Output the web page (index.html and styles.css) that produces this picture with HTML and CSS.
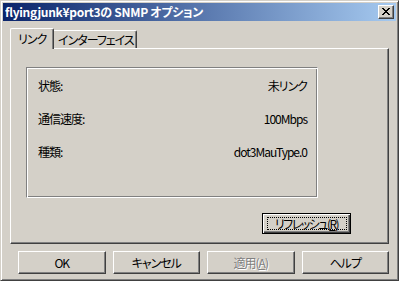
FILE: index.html
```html
<!DOCTYPE html>
<html lang="ja">
<head>
<meta charset="utf-8">
<title>SNMP オプション</title>
<link rel="stylesheet" href="styles.css">
</head>
<body>
<div class="window">
  <div class="titlebar">
    <span class="title">flyingjunk¥port3の SNMP オプション</span>
    <span class="close">
      <svg width="8" height="7" viewBox="0 0 8 7" shape-rendering="crispEdges">
        <path d="M0 0h2v1h-2zM6 0h2v1h-2zM1 1h2v1h-2zM5 1h2v1h-2zM2 2h4v1h-4zM3 3h2v1h-2zM2 4h4v1h-4zM1 5h2v1h-2zM5 5h2v1h-2zM0 6h2v1h-2zM6 6h2v1h-2z" fill="#000"/>
      </svg>
    </span>
  </div>
  <div class="content">
    <div class="tabs">
      <div class="tab active">リンク</div>
      <div class="tab inactive">インターフェイス</div>
    </div>
    <div class="panel">
      <div class="group">
        <div class="row"><span>状態:</span><span>未リンク</span></div>
        <div class="row"><span>通信速度:</span><span>100Mbps</span></div>
        <div class="row"><span>種類:</span><span>dot3MauType.0</span></div>
      </div>
      <div class="refresh-row">
        <div class="btn default"><span class="focus">リフレッシュ(<u>R</u>)</span></div>
      </div>
    </div>
    <div class="buttons">
      <div class="btn">OK</div>
      <div class="btn">キャンセル</div>
      <div class="btn disabled">適用(<u>A</u>)</div>
      <div class="btn">ヘルプ</div>
    </div>
  </div>
</div>
</body>
</html>
```
FILE: styles.css
```css
* { box-sizing: border-box; }
html, body { margin: 0; padding: 0; }
body {
  width: 399px;
  height: 281px;
  background: #d4d0c8;
  font-family: "Noto Sans CJK JP", "Liberation Sans", sans-serif;
  font-size: 12px;
  font-feature-settings: "palt";
  letter-spacing: -1px;
  color: #000;
  overflow: hidden;
}
.window {
  width: 399px;
  height: 281px;
  border: 1px solid;
  border-color: #d4d0c8 #404040 #404040 #d4d0c8;
  box-shadow: inset 1px 1px #fff, inset -1px -1px #808080;
  padding: 2px;
  background: #d4d0c8;
}
.titlebar {
  height: 18px;
  background: linear-gradient(to right, #0a246a, #a6caf0);
  display: flex;
  align-items: center;
  justify-content: space-between;
  padding: 0 2px 0 2px;
}
.title {
  color: #fff;
  font-weight: bold;
  font-size: 12px;
  line-height: 18px;
  white-space: nowrap;
  letter-spacing: -0.3px;
}
.close {
  width: 16px;
  height: 14px;
  background: #d4d0c8;
  border: 1px solid;
  border-color: #fff #404040 #404040 #fff;
  box-shadow: inset -1px -1px #808080;
  display: flex;
  align-items: center;
  justify-content: center;
  padding: 0 1px 1px 0;
}
.close svg { display: block; }
.content {
  padding: 0 7px 0 7px;
}
.tabs {
  display: flex;
  align-items: flex-end;
  height: 20px;
  margin-top: 7px;
  position: relative;
  z-index: 1;
}
.tab {
  border-top: 1px solid #fff;
  border-left: 1px solid #fff;
  border-right: 1px solid #404040;
  box-shadow: inset -1px 0 #808080;
  background: #d4d0c8;
  white-space: nowrap;
  display: flex;
  align-items: center;
}
.tab.active {
  width: 44px;
  height: 21px;
  margin-bottom: -1px;
  padding: 0 0 1px 7px;
  border-radius: 2px 2px 0 0;
  position: relative;
  z-index: 2;
}
.tab.inactive {
  width: 83px;
  height: 18px;
  padding: 0 0 0 4px;
  border-left: none;
  border-radius: 0 2px 0 0;
}
.panel {
  height: 196px;
  border: 1px solid;
  border-color: #fff #404040 #404040 #fff;
  box-shadow: inset -1px -1px #808080;
  padding: 18px 0 0 15px;
}
.group {
  width: 292px;
  height: 131px;
  border: 1px solid;
  border-color: #808080 #fff #fff #808080;
  box-shadow: inset 1px 1px #fff, inset -1px -1px #808080;
  padding: 1px 10px 0 11px;
}
.row {
  height: 33px;
  display: flex;
  align-items: center;
  justify-content: space-between;
}
.refresh-row {
  display: flex;
  justify-content: flex-end;
  padding-right: 37px;
  margin-top: 15px;
}
.btn {
  height: 23px;
  border: 1px solid;
  border-color: #fff #404040 #404040 #fff;
  box-shadow: inset -1px -1px #808080;
  display: flex;
  align-items: center;
  justify-content: center;
  white-space: nowrap;
  background: #d4d0c8;
}
.btn u { text-decoration: underline; }
.btn.default {
  width: 89px;
  height: 21px;
  border: 1px solid #000;
  box-shadow: inset 1px 1px #fff, inset -1px -1px #404040, inset -2px -2px #808080;
  padding: 3px 3px 3px 4px;
}
.focus {
  flex: 1;
  align-self: stretch;
  border: 1px dotted #000;
  display: flex;
  align-items: center;
  justify-content: center;
  line-height: 1;
  letter-spacing: -1.5px;
  padding-right: 1px;
}
.buttons {
  display: flex;
  gap: 7px;
  margin-top: 7px;
  padding-left: 8px;
}
.buttons .btn { width: 88px; }
.btn.disabled {
  color: #808080;
  text-shadow: 1px 1px #fff;
}
```
